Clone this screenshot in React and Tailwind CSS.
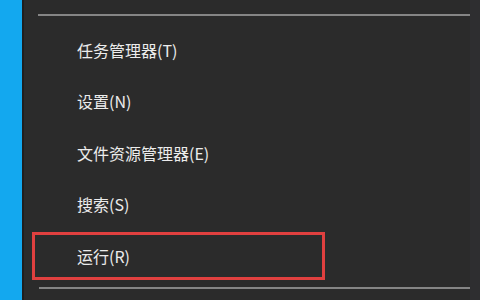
import React from 'react';

const items = [
  { label: '任务管理器(T)' },
  { label: '设置(N)' },
  { label: '文件资源管理器(E)' },
  { label: '搜索(S)' },
  { label: '运行(R)', marked: true },
];

const App = () => {
  return (
    <div
      className="w-[480px] h-[300px] flex overflow-hidden bg-[#2b2b2b]"
      style={{ fontFamily: '"Microsoft YaHei", "Noto Sans CJK SC", "Noto Sans", sans-serif' }}
    >
      {/* taskbar edge */}
      <div className="w-[22px] h-full bg-[#13a8ef]" />
      <div className="w-[2px] h-full bg-[#1f1f1f]" />

      {/* menu */}
      <div className="flex-1 flex flex-col pt-[14px]">
        <div className="ml-[14px] h-[2px] bg-[#858585]" />
        <div className="flex flex-col pt-[8px]">
          {items.map((item) => (
            <div key={item.label} className="relative h-[51.5px] flex items-center pl-[53px]">
              <span className="text-[16px] leading-none text-[#ececec]">{item.label}</span>
              {item.marked && (
                <div className="absolute left-[8px] top-[1.5px] w-[293px] h-[48px] border-[3px] border-[#e0403f]" />
              )}
            </div>
          ))}
        </div>
        <div className="ml-[15px] mt-[5px] h-[2px] bg-[#858585]" />
      </div>

      <div className="w-[10px] h-full bg-[#2e2e30]" />
    </div>
  );
};

export default App;
